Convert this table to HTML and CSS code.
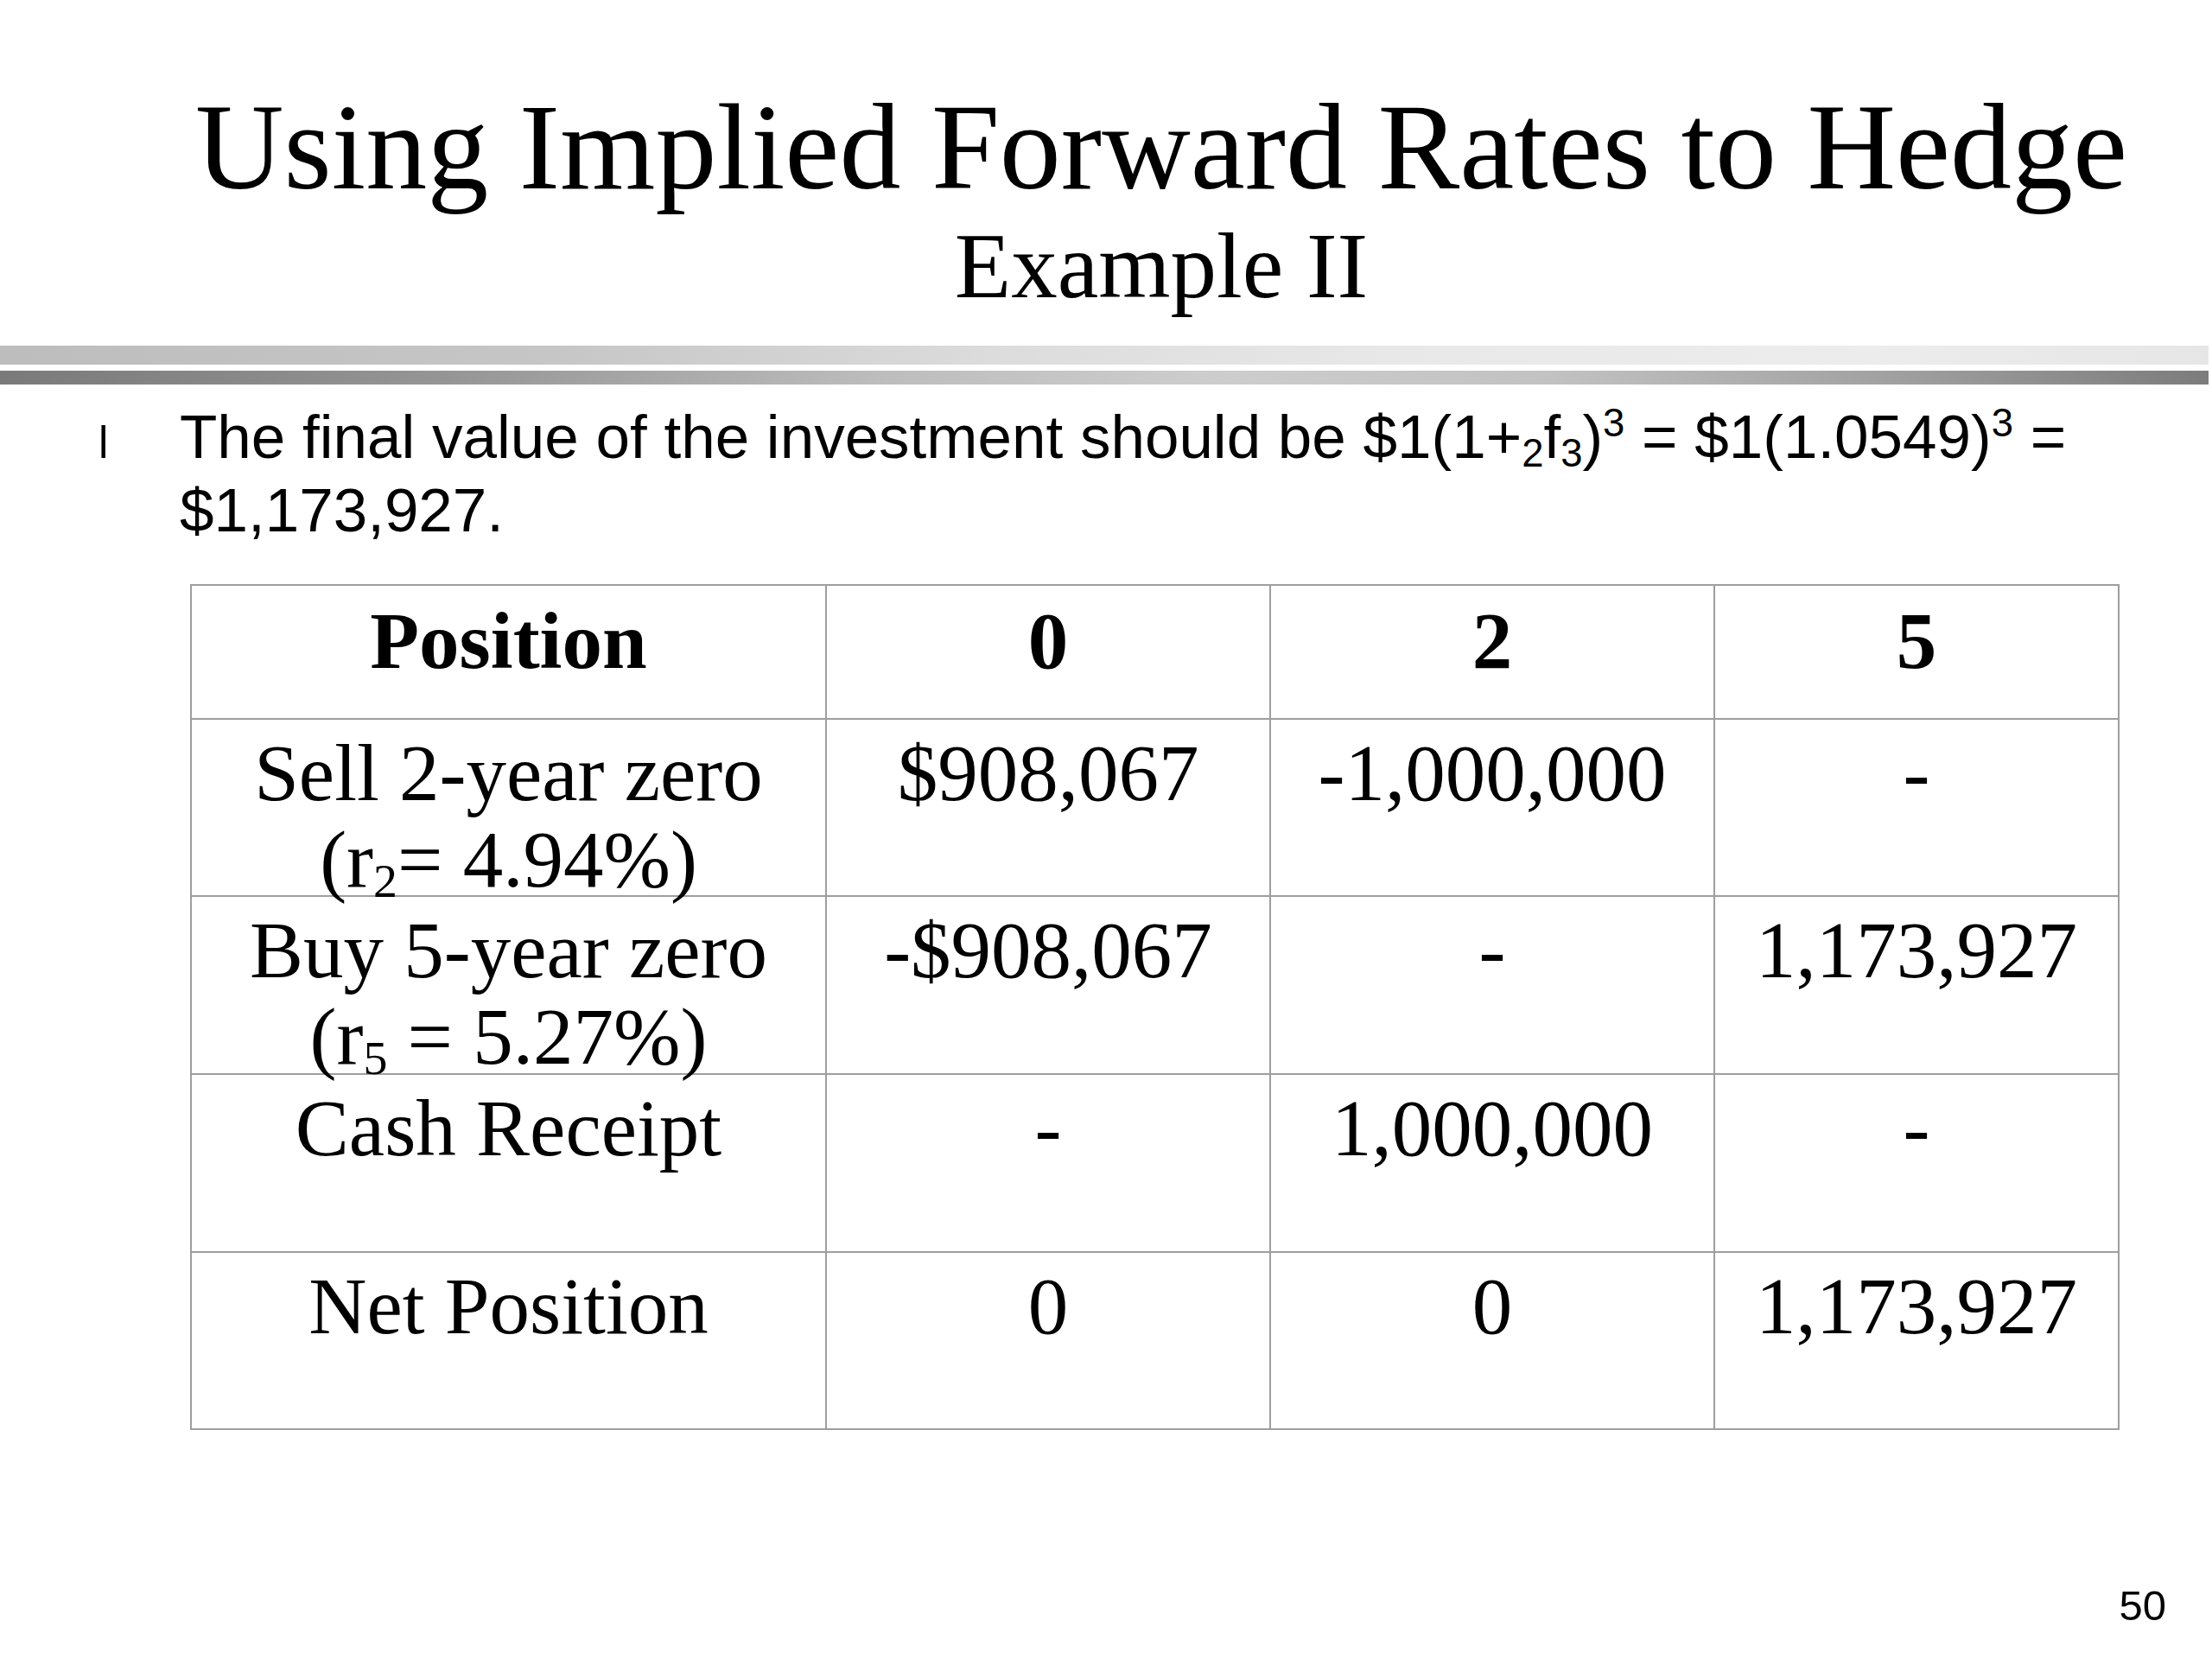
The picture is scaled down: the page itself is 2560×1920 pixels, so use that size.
FILE: index.html
```html
<!DOCTYPE html>
<html lang="en">
<head>
<meta charset="utf-8">
<title>Using Implied Forward Rates to Hedge</title>
<link rel="stylesheet" href="styles.css">
</head>
<body>
<div class="slide">
  <header class="head">
    <h1 class="title">Using Implied Forward Rates to Hedge</h1>
    <h2 class="subtitle">Example II</h2>
  </header>
  <div class="rule rule-light"></div>
  <div class="rule rule-dark"></div>
  <ul class="bullets">
    <li class="bullet">
      <span class="mark">l</span>
      <span class="btext">The final value of the investment should be $1(1+<sub>2</sub>f<sub>3</sub>)<sup>3</sup> = $1(1.0549)<sup>3</sup> =<br>$1,173,927.</span>
    </li>
  </ul>
  <div class="grid">
    <div class="cell hd">Position</div>
    <div class="cell hd">0</div>
    <div class="cell hd">2</div>
    <div class="cell hd">5</div>

    <div class="cell">Sell 2-year zero<br>(r<sub class="tsub">2</sub>= 4.94%)</div>
    <div class="cell">$908,067</div>
    <div class="cell">-1,000,000</div>
    <div class="cell">-</div>

    <div class="cell">Buy 5-year zero<br>(r<sub class="tsub">5</sub> = 5.27%)</div>
    <div class="cell">-$908,067</div>
    <div class="cell">-</div>
    <div class="cell">1,173,927</div>

    <div class="cell">Cash Receipt</div>
    <div class="cell">-</div>
    <div class="cell">1,000,000</div>
    <div class="cell">-</div>

    <div class="cell">Net Position</div>
    <div class="cell">0</div>
    <div class="cell">0</div>
    <div class="cell">1,173,927</div>
  </div>
  <div class="pagenum">50</div>
</div>
</body>
</html>
```
FILE: styles.css
```css
html, body {
  margin: 0;
  padding: 0;
  background: #ffffff;
}

.slide {
  width: 2560px;
  height: 1920px;
  position: relative;
  display: flex;
  flex-direction: column;
  background: #ffffff;
  color: #000000;
  overflow: hidden;
}

.head {
  padding-top: 100px;
  padding-left: 128px;
  text-align: center;
  font-family: "Liberation Serif", "Times New Roman", serif;
}

.title {
  margin: 0;
  font-weight: normal;
  font-size: 142px;
  line-height: 140px;
  height: 140px;
}

.subtitle {
  margin: 16px 0 0 0;
  font-weight: normal;
  font-size: 107px;
  line-height: 104px;
  height: 104px;
}

.rule {
  width: 2556px;
}

.rule-light {
  margin-top: 40px;
  height: 22px;
  background: linear-gradient(to right, #bdbdbd 0%, #c6c6c6 25%, #dcdcdc 45%, #e9e9e9 65%, #ececec 85%, #e6e6e6 100%);
}

.rule-dark {
  margin-top: 7px;
  height: 16px;
  background: linear-gradient(to right, #7a7a7a 0%, #959595 20%, #bdbdbd 40%, #cdcdcd 55%, #c2c2c2 70%, #a2a2a2 85%, #7c7c7c 100%);
}

.bullets {
  list-style: none;
  margin: 18px 0 0 0;
  padding: 0 0 0 114px;
  font-family: "Liberation Sans", Arial, sans-serif;
  font-size: 71px;
  line-height: 85px;
}

.bullet {
  display: flex;
  align-items: baseline;
}

.mark {
  width: 94px;
  flex: none;
  font-size: 51px;
}

.btext sub,
.btext sup {
  font-size: 0.64em;
  line-height: 0;
}

.btext sub {
  vertical-align: -0.22em;
}

.btext sup {
  vertical-align: 0.55em;
}

.grid {
  margin: 43px 0 0 220px;
  display: grid;
  grid-template-columns: 735px 514px 514px 468px;
  grid-template-rows: 155px 205px 206px 206px 205px;
  width: max-content;
  border-top: 2px solid #9e9e9e;
  border-left: 2px solid #9e9e9e;
  font-family: "Liberation Serif", "Times New Roman", serif;
  font-size: 93px;
  line-height: 100px;
}

.cell {
  box-sizing: border-box;
  border-right: 2px solid #9e9e9e;
  border-bottom: 2px solid #9e9e9e;
  padding-top: 12px;
  text-align: center;
  white-space: nowrap;
  overflow: visible;
}

.hd {
  font-weight: bold;
  padding-top: 14px;
}

.tsub {
  font-size: 0.6em;
  line-height: 0;
  vertical-align: -0.22em;
}

.pagenum {
  position: absolute;
  right: 53px;
  top: 1830px;
  font-family: "Liberation Sans", Arial, sans-serif;
  font-size: 49px;
  line-height: 56px;
}
```
